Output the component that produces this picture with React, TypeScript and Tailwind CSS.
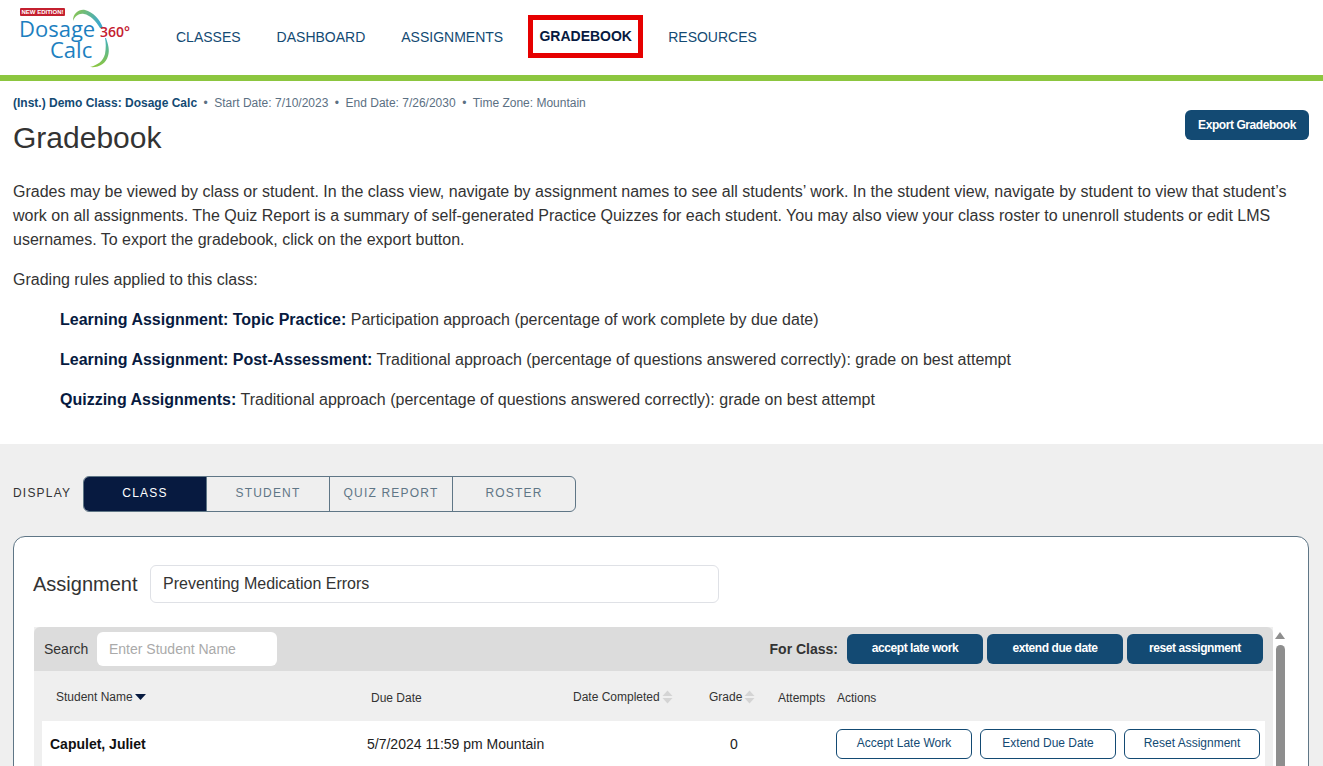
const navItems = ['CLASSES', 'DASHBOARD', 'ASSIGNMENTS', 'GRADEBOOK', 'RESOURCES']
const tabs = ['CLASS', 'STUDENT', 'QUIZ REPORT', 'ROSTER']
const classActions = ['accept late work', 'extend due date', 'reset assignment']
const rowActions = ['Accept Late Work', 'Extend Due Date', 'Reset Assignment']

const navy = '#071a40'

function Logo() {
  return (
    <div className="relative w-[128px] h-[75px] shrink-0">
      <span className="absolute left-[20px] top-[8px] w-[45px] h-[8px] bg-[#c4202f] text-white text-[6px] leading-[8px] font-bold text-center rounded-[1px] whitespace-nowrap">
        NEW EDITION!
      </span>
      <svg className="absolute left-[70px] top-[8px]" width="42" height="62" viewBox="0 0 42 62" fill="none">
        <defs>
          <linearGradient id="arc" x1="0" y1="0" x2="1" y2="0.3">
            <stop offset="0" stopColor="#8fc74a" />
            <stop offset="1" stopColor="#3fa9c9" />
          </linearGradient>
          <linearGradient id="arc2" x1="0" y1="0" x2="0" y2="1">
            <stop offset="0" stopColor="#3fb0c0" />
            <stop offset="1" stopColor="#8cc63f" />
          </linearGradient>
        </defs>
        <path d="M3 13 C3 5 9 1 15 2 C23 4 30 11 33 20 L30 20 C26 13 20 7 14 6 C9 5 5 8 3 13 Z" fill="url(#arc)" />
        <path d="M36 30 C38 36 40 42 38 48 C36 56 28 60 20 59 C28 57 33 53 35 46 C36 40 36 35 35 30 Z" fill="url(#arc2)" />
      </svg>
      <span className="absolute left-[19px] top-[18px] text-[22px] leading-[20px] text-[#1c7fc0] font-['Open_Sans',sans-serif]">Dosage</span>
      <span className="absolute left-[50px] top-[39px] text-[22px] leading-[20px] text-[#1c7fc0] font-['Open_Sans',sans-serif]">Calc</span>
      <span className="absolute left-[100px] top-[23px] text-[14px] leading-[18px] font-semibold text-[#c4202f] font-['Open_Sans',sans-serif]">360°</span>
    </div>
  )
}

function SortArrows() {
  return (
    <svg width="11" height="14" viewBox="0 0 11 14" className="ml-[2px]">
      <path d="M5.5 0.5 L10.5 6 H0.5 Z" fill="#d4d4d4" />
      <path d="M5.5 13.5 L10.5 8 H0.5 Z" fill="#d4d4d4" />
    </svg>
  )
}

export default function App() {
  return (
    <div className="w-[1323px] h-[766px] overflow-hidden bg-white text-[#333] font-['Liberation_Sans',Arial,sans-serif]">
      {/* Header */}
      <header className="h-[81px] border-b-[6px] border-[#8cc63f] flex items-center">
        <Logo />
        <nav className="flex items-center h-[43px] mt-[-2px] ml-[48px]">
          {navItems.map((item) =>
            item === 'GRADEBOOK' ? (
              <a key={item} className="h-[43px] w-[115px] ml-[25px] mr-[25px] border-[5px] border-[#e60000] flex items-center justify-center text-[14px] font-bold text-[#071a40]">
                {item}
              </a>
            ) : (
              <a key={item} className="mt-[2px] text-[14px] text-[#134a73] mr-[36px] last:mr-0 [&:nth-child(3)]:mr-0">
                {item}
              </a>
            ),
          )}
        </nav>
      </header>

      {/* Class info + intro */}
      <section className="h-[363px] px-[13px] pt-[15px] relative">
        <p className="text-[12px] leading-[14px] text-[#5b7083]">
          <span className="font-bold text-[#134a73]">(Inst.) Demo Class: Dosage Calc</span>
          <span className="mx-[6.5px]">•</span>Start Date: 7/10/2023
          <span className="mx-[6.5px]">•</span>End Date: 7/26/2030
          <span className="mx-[6.5px]">•</span>Time Zone: Mountain
        </p>
        <h1 className="text-[30px] leading-[36px] text-[#333] mt-[10px]">Gradebook</h1>
        <button className="absolute right-[14px] top-[29px] w-[124px] h-[30px] pb-[1px] rounded-[6px] bg-[#134a73] text-white text-[12px] font-bold tracking-[-0.43px]">
          Export Gradebook
        </button>
        <p className="mt-[24px] text-[16px] leading-[24px] text-[#333]">
          Grades may be viewed by class or student. In the class view, navigate by assignment names to see all students’ work. In the student view, navigate by student to view that student’s work on all assignments. The Quiz Report is a summary of self-generated Practice Quizzes for each student. You may also view your class roster to unenroll students or edit LMS usernames. To export the gradebook, click on the export button.
        </p>
        <p className="mt-[16px] text-[16px] leading-[24px]">Grading rules applied to this class:</p>
        <div className="ml-[47px] text-[16px] leading-[24px]">
          <p className="mt-[16px]"><b className="text-[#071a40]">Learning Assignment: Topic Practice:</b> Participation approach (percentage of work complete by due date)</p>
          <p className="mt-[16px]"><b className="text-[#071a40]">Learning Assignment: Post-Assessment:</b> Traditional approach (percentage of questions answered correctly): grade on best attempt</p>
          <p className="mt-[16px]"><b className="text-[#071a40]">Quizzing Assignments:</b> Traditional approach (percentage of questions answered correctly): grade on best attempt</p>
        </div>
      </section>

      {/* Gray area */}
      <section className="h-[322px] bg-[#efefef] px-[13px] pt-[32px]">
        <div className="flex items-center h-[36px]">
          <span className="w-[70px] pb-[2px] text-[12px] tracking-[1.2px] text-[#333]">DISPLAY</span>
          <div className="flex h-[36px] w-[493px] rounded-[6px] border border-[#5f7686] overflow-hidden">
            {tabs.map((tab, i) => (
              <div
                key={tab}
                className={
                  i === 0
                    ? 'w-[122px] pb-[2px] bg-[#071a40] text-white text-[12px] tracking-[1.2px] flex items-center justify-center'
                    : 'flex-1 pb-[2px] border-l border-[#5f7686] text-[#5f7686] text-[12px] tracking-[1.2px] flex items-center justify-center'
                }
              >
                {tab}
              </div>
            ))}
          </div>
        </div>

        {/* Card */}
        <div className="mt-[24px] mr-[1px] h-[300px] bg-white rounded-t-[12px] border border-[#5f7686] pl-[20px] pt-[28px]">
          <div className="flex items-center h-[38px]">
            <span className="text-[20px] text-[#333] w-[117px] ml-[-1px]">Assignment</span>
            <div className="w-[569px] h-[38px] rounded-[6px] border border-[#dfe1e6] flex items-center pl-[12px] text-[16px] text-[#333]">
              Preventing Medication Errors
            </div>
          </div>

          <div className="flex mt-[24px]">
            <div className="w-[1239px] bg-[#efefef]">
              {/* Toolbar */}
              <div className="h-[44px] bg-[#dcdcdc] rounded-t-[6px] flex items-center pl-[10px] pr-[10px]">
                <span className="text-[14px] text-[#333] w-[53px]">Search</span>
                <div className="w-[180px] h-[34px] rounded-[6px] bg-white flex items-center pl-[12px] text-[14px] text-[#aaa]">
                  Enter Student Name
                </div>
                <b className="ml-auto mr-[9px] text-[14px] text-[#333]">For Class:</b>
                <div className="flex gap-[4px]">
                  {classActions.map((label) => (
                    <button key={label} className="w-[136px] h-[30px] pb-[2px] rounded-[6px] bg-[#134a73] text-white text-[12px] font-bold tracking-[-0.43px]">
                      {label}
                    </button>
                  ))}
                </div>
              </div>

              {/* Columns */}
              <div className="h-[50px] pt-[2px] flex items-center text-[12px] text-[#333] pl-[22px]">
                <div className="w-[315px] flex items-center">
                  Student Name
                  <svg width="11" height="6" viewBox="0 0 11 6" className="ml-[2px]">
                    <path d="M0 0 H11 L5.5 6 Z" fill={navy} />
                  </svg>
                </div>
                <div className="w-[202px] pt-[2px]">Due Date</div>
                <div className="w-[136px] flex items-center">Date Completed<SortArrows /></div>
                <div className="w-[69px] flex items-center">Grade<SortArrows /></div>
                <div className="w-[59px] pt-[2px]">Attempts</div>
                <div className="pt-[2px]">Actions</div>
              </div>

              {/* Row */}
              <div className="ml-[8px] w-[1223px] h-[60px] bg-white flex items-start pt-[8px]">
                <b className="w-[325px] pl-[8px] text-[14px] leading-[30px] text-[#111]">Capulet, Juliet</b>
                <span className="w-[363px] text-[14px] leading-[30px] text-[#222]">5/7/2024 11:59 pm Mountain</span>
                <span className="w-[69px] text-[14px] leading-[30px] text-[#222]">0</span>
                <div className="flex gap-[8px] ml-[37px]">
                  {rowActions.map((label) => (
                    <button key={label} className="w-[136px] h-[30px] pb-[2px] rounded-[6px] border border-[#134a73] text-[#134a73] text-[12px] bg-white">
                      {label}
                    </button>
                  ))}
                </div>
              </div>
            </div>

            {/* Scrollbar */}
            <div className="ml-[2px] w-[10px] flex flex-col items-center pt-[5px]">
              <svg width="10" height="7" viewBox="0 0 10 7"><path d="M5 0 L10 7 H0 Z" fill="#8e8e8e" /></svg>
              <div className="w-[9px] h-[140px] mt-[6px] rounded-t-[5px] bg-[#8e8e8e]" />
            </div>
          </div>
        </div>
      </section>
    </div>
  )
}
